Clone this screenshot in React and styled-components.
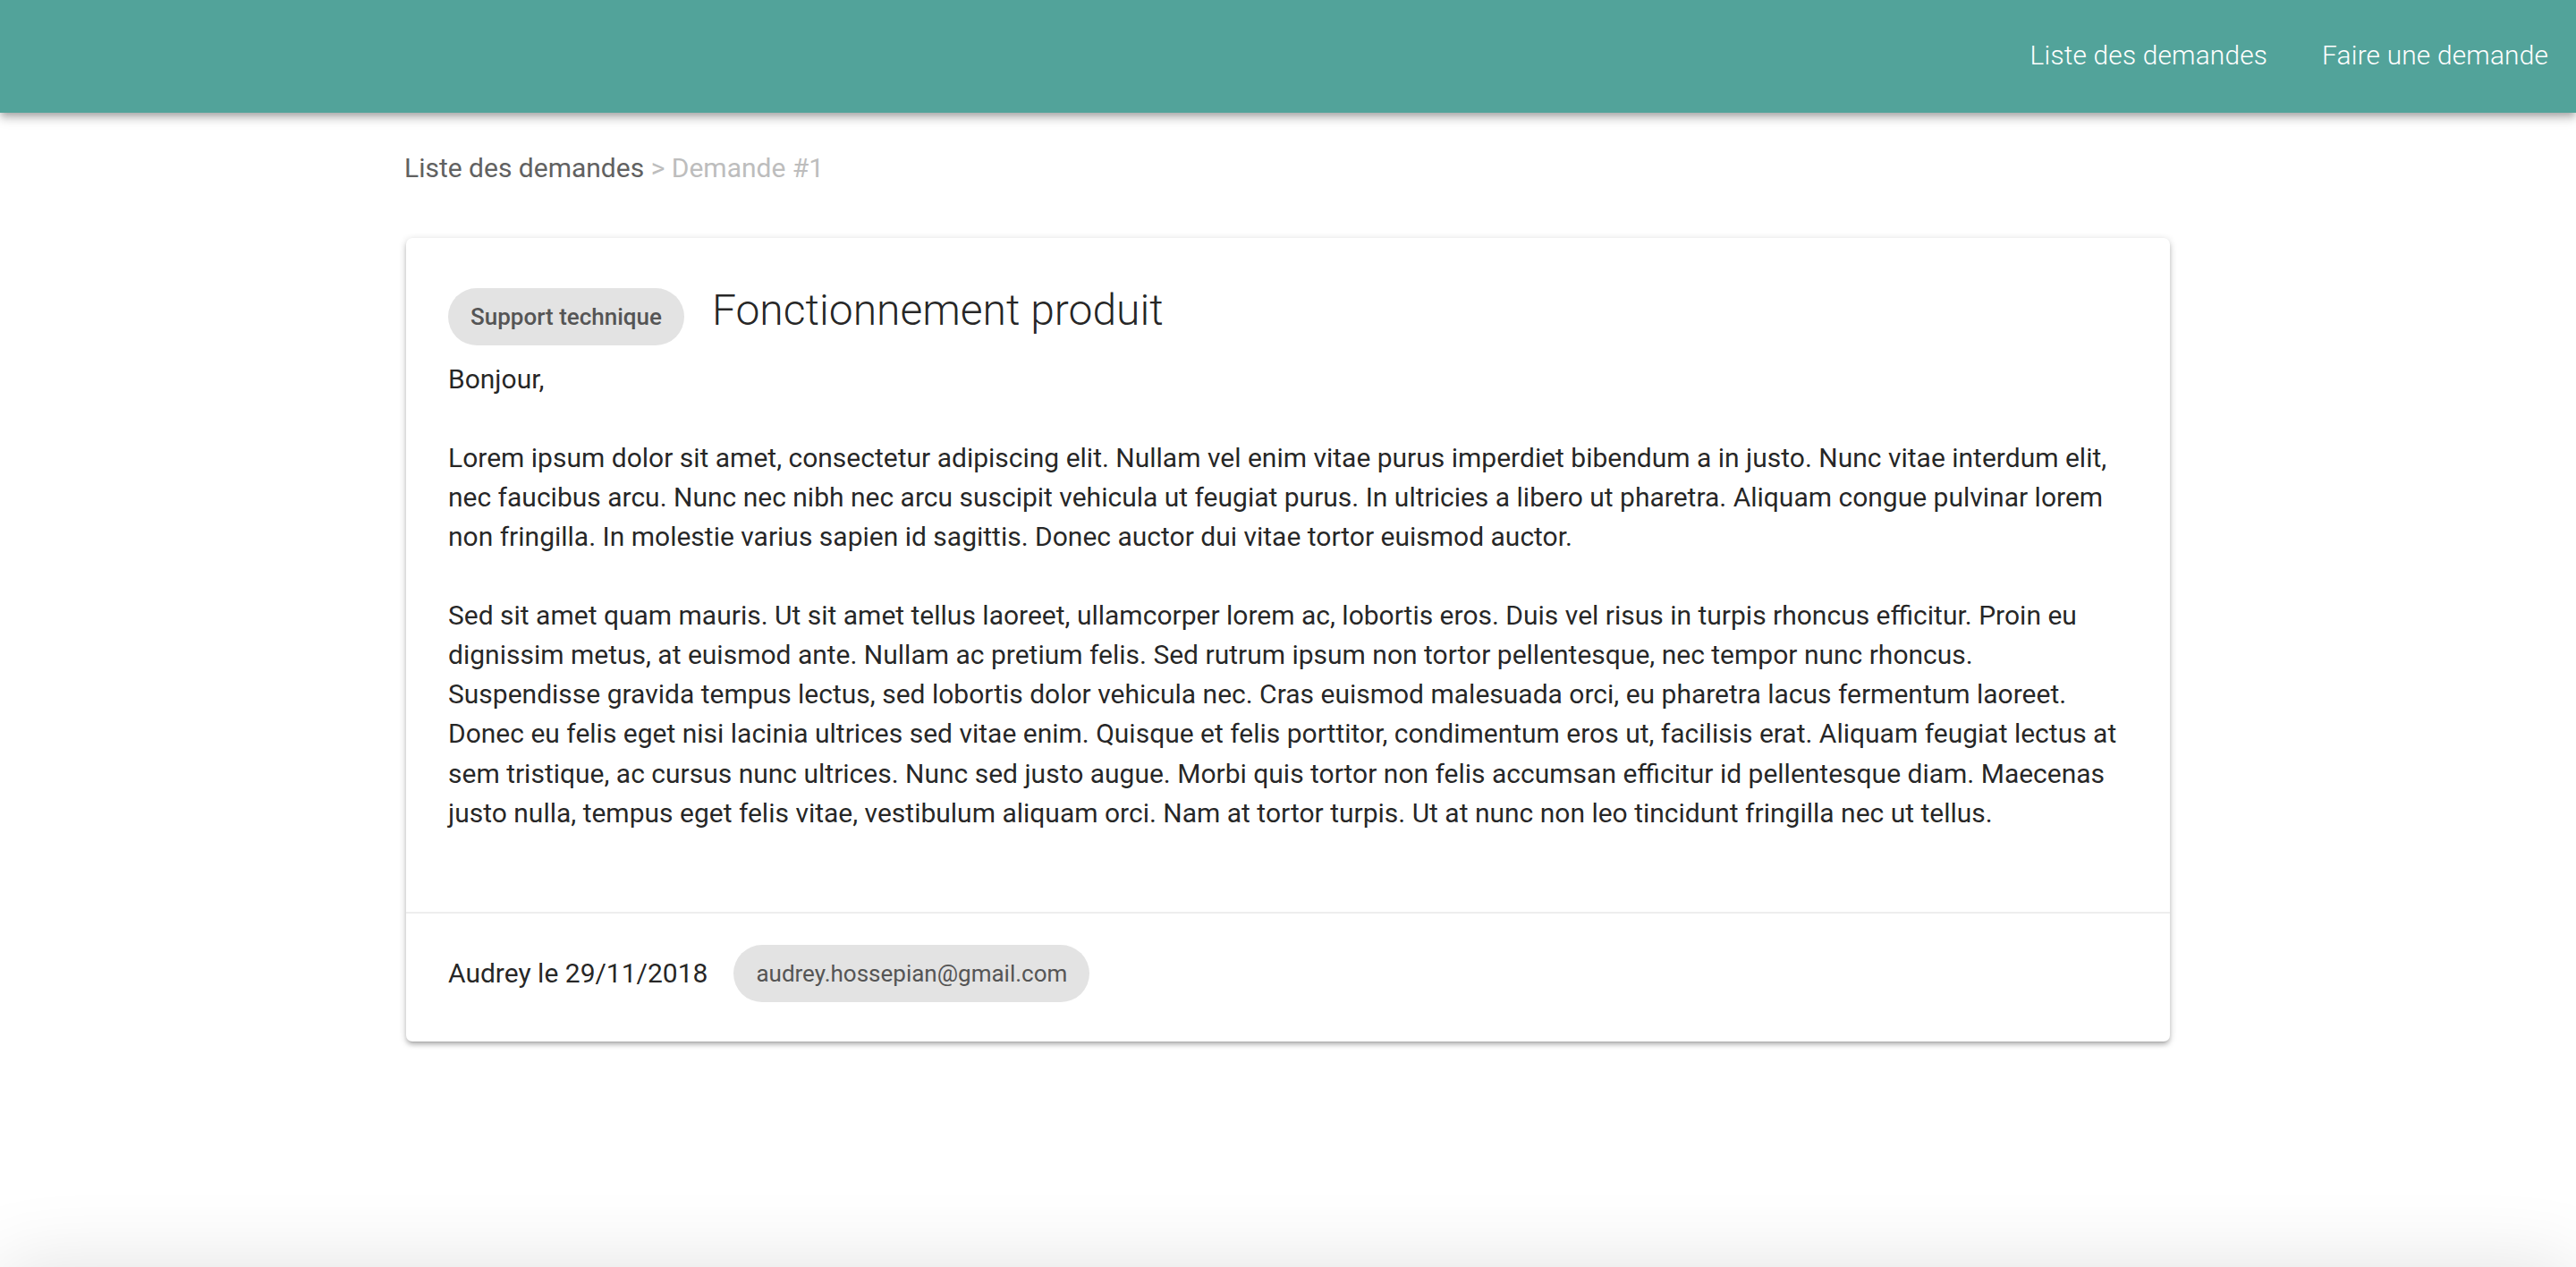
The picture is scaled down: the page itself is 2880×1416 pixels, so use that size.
import React from "react";
import styled, { createGlobalStyle } from "styled-components";

const GlobalStyle = createGlobalStyle`
  html, body {
    margin: 0;
    padding: 0;
    background: #ffffff;
    font-family: Roboto, "Liberation Sans", Arial, sans-serif;
  }
  * {
    box-sizing: border-box;
  }
`;

const request = {
  id: 1,
  category: "Support technique",
  title: "Fonctionnement produit",
  author: "Audrey",
  date: "29/11/2018",
  email: "audrey.hossepian@gmail.com",
  paragraphs: [
    "Bonjour,",
    "Lorem ipsum dolor sit amet, consectetur adipiscing elit. Nullam vel enim vitae purus imperdiet bibendum a in justo. Nunc vitae interdum elit, nec faucibus arcu. Nunc nec nibh nec arcu suscipit vehicula ut feugiat purus. In ultricies a libero ut pharetra. Aliquam congue pulvinar lorem non fringilla. In molestie varius sapien id sagittis. Donec auctor dui vitae tortor euismod auctor.",
    "Sed sit amet quam mauris. Ut sit amet tellus laoreet, ullamcorper lorem ac, lobortis eros. Duis vel risus in turpis rhoncus efficitur. Proin eu dignissim metus, at euismod ante. Nullam ac pretium felis. Sed rutrum ipsum non tortor pellentesque, nec tempor nunc rhoncus. Suspendisse gravida tempus lectus, sed lobortis dolor vehicula nec. Cras euismod malesuada orci, eu pharetra lacus fermentum laoreet. Donec eu felis eget nisi lacinia ultrices sed vitae enim. Quisque et felis porttitor, condimentum eros ut, facilisis erat. Aliquam feugiat lectus at sem tristique, ac cursus nunc ultrices. Nunc sed justo augue. Morbi quis tortor non felis accumsan efficitur id pellentesque diam. Maecenas justo nulla, tempus eget felis vitae, vestibulum aliquam orci. Nam at tortor turpis. Ut at nunc non leo tincidunt fringilla nec ut tellus.",
  ],
};

export default function App() {
  return (
    <Page>
      <GlobalStyle />
      <AppBar>
        <NavLink href="#">Liste des demandes</NavLink>
        <NavLink href="#">Faire une demande</NavLink>
      </AppBar>

      <Main>
        <Breadcrumb>
          <Crumb>Liste des demandes</Crumb>
          <Crumb $current> &gt; Demande #{request.id}</Crumb>
        </Breadcrumb>

        <Card>
          <CardBody>
            <TitleRow>
              <Chip $bold>{request.category}</Chip>
              <Title>{request.title}</Title>
            </TitleRow>
            {request.paragraphs.map((p, i) => (
              <Paragraph key={i}>{p}</Paragraph>
            ))}
          </CardBody>
          <CardFooter>
            <Author>
              {request.author} le {request.date}
            </Author>
            <Chip>{request.email}</Chip>
          </CardFooter>
        </Card>
      </Main>

      <BottomShade />
    </Page>
  );
}

const Page = styled.div`
  min-height: 1416px;
  overflow: hidden;
`;

const AppBar = styled.header`
  height: 126px;
  background: #52a39a;
  display: flex;
  align-items: center;
  justify-content: flex-end;
  gap: 61px;
  padding: 0 31px 4px 0;
  box-shadow: 0px 4px 7px -2px rgba(0, 0, 0, 0.2),
    0px 7px 9px 0px rgba(0, 0, 0, 0.14), 0px 2px 18px 0px rgba(0, 0, 0, 0.12);
  position: relative;
  z-index: 2;
`;

const NavLink = styled.a`
  color: #ffffff;
  text-decoration: none;
  font-size: 29.8px;
  font-weight: 300;
  letter-spacing: 0.2px;
`;

const Main = styled.main`
  width: 1972px;
  margin: 0 auto;
`;

const Breadcrumb = styled.div`
  padding: 40px 0 0 0;
  height: 140px;
  font-size: 30px;
  line-height: 44px;
  margin-left: -2px;
`;

const Crumb = styled.span`
  color: ${({ $current }) => ($current ? "#bdbdbd" : "#616161")};
`;

const Card = styled.section`
  background: #ffffff;
  border-radius: 7px;
  box-shadow: 0px 2px 9px 0px rgba(0, 0, 0, 0.2),
    0px 4px 4px 0px rgba(0, 0, 0, 0.14), 0px 5px 2px -4px rgba(0, 0, 0, 0.12);
`;

const CardBody = styled.div`
  padding: 49px 47px 44px 47px;
`;

const TitleRow = styled.div`
  display: flex;
  align-items: center;
  gap: 31px;
  margin-bottom: 10px;
`;

const Chip = styled.span`
  display: inline-flex;
  align-items: center;
  height: 64px;
  padding: 0 25px;
  border-radius: 32px;
  background: #e3e3e3;
  color: #555555;
  font-size: 26px;
  font-weight: ${({ $bold }) => ($bold ? 500 : 400)};
  white-space: nowrap;
`;

const Title = styled.h1`
  margin: 0 0 14px 0;
  font-size: 48px;
  font-weight: 300;
  line-height: 63px;
  color: rgba(0, 0, 0, 0.87);
`;

const Paragraph = styled.p`
  margin: 0 0 44px 0;
  font-size: 30px;
  line-height: 44.07px;
  color: rgba(0, 0, 0, 0.87);
`;

const CardFooter = styled.div`
  border-top: 2px solid #eeeeee;
  display: flex;
  align-items: center;
  gap: 29px;
  padding: 35px 47px 44px 47px;
`;

const Author = styled.span`
  font-size: 30px;
  color: rgba(0, 0, 0, 0.87);
`;

const BottomShade = styled.div`
  position: fixed;
  left: 0;
  right: 0;
  top: 100%;
  height: 100px;
  box-shadow: 0 0 90px rgba(0, 0, 0, 0.12);
`;
